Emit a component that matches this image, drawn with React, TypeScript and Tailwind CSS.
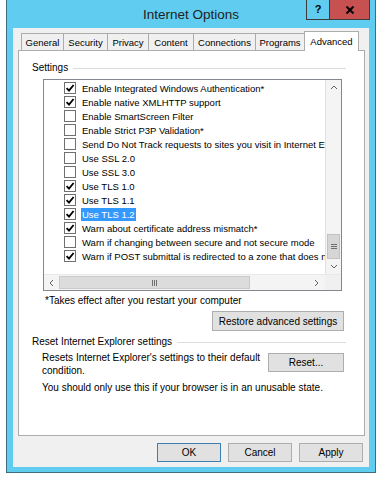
import React from "react";

const FONT = { fontFamily: '"Liberation Sans", Arial, sans-serif' };

function Box({ checked }: { checked: boolean }) {
  return (
    <span className="w-[12px] h-[12px] border border-[#707070] bg-white flex items-center justify-center shrink-0">
      {checked && (
        <svg width="10" height="10" viewBox="0 0 10 10">
          <path d="M1.6 5.2 L4 7.6 L8.6 2" stroke="#000" strokeWidth="1.8" fill="none" />
        </svg>
      )}
    </span>
  );
}

const rows: [string, boolean, boolean][] = [
  ["Enable Integrated Windows Authentication*", true, false],
  ["Enable native XMLHTTP support", true, false],
  ["Enable SmartScreen Filter", false, false],
  ["Enable Strict P3P Validation*", false, false],
  ["Send Do Not Track requests to sites you visit in Internet E", false, false],
  ["Use SSL 2.0", false, false],
  ["Use SSL 3.0", false, false],
  ["Use TLS 1.0", true, false],
  ["Use TLS 1.1", true, false],
  ["Use TLS 1.2", true, true],
  ["Warn about certificate address mismatch*", true, false],
  ["Warn if changing between secure and not secure mode", false, false],
  ["Warn if POST submittal is redirected to a zone that does n", true, false],
];

const tabs: [string, number][] = [
  ["General", 42],
  ["Security", 44],
  ["Privacy", 41],
  ["Content", 45],
  ["Connections", 62],
  ["Programs", 49],
];

function Chevron({ dir }: { dir: "up" | "down" | "left" | "right" }) {
  const d =
    dir === "up"
      ? "M1 5 L4 2 L7 5"
      : dir === "down"
      ? "M1 2 L4 5 L7 2"
      : dir === "left"
      ? "M5 1 L2 4 L5 7"
      : "M2 1 L5 4 L2 7";
  return (
    <svg width="8" height="8" viewBox="0 0 8 8">
      <path d={d} stroke="#606060" strokeWidth="1" fill="none" />
    </svg>
  );
}

export default function App() {
  return (
    <div className="w-[377px] h-[477px] bg-white text-black" style={FONT}>
      <div className="ml-[6px] w-[370px] h-[473px] border-x border-b border-[#3d6c83] bg-[#60cdf0] flex flex-col">
        {/* Title bar */}
        <div className="relative h-[28px] shrink-0 flex items-center justify-center">
          <span className="text-[13.5px] text-[#222] leading-none pt-[1px]">Internet Options</span>
          <div className="absolute top-0 right-[5px] flex border-x border-b border-[#3c3c3c]">
            <div className="w-[23px] h-[19px] border-r border-[#3c3c3c] flex items-center justify-center text-[11px] font-bold leading-none">
              ?
            </div>
            <div className="w-[39px] h-[19px] bg-[#c75050] flex items-center justify-center">
              <svg width="10" height="8" viewBox="0 0 10 8">
                <path d="M1.5 0.5 L8.5 7.5 M8.5 0.5 L1.5 7.5" stroke="#000" strokeWidth="2" />
              </svg>
            </div>
          </div>
        </div>

        {/* Client */}
        <div className="mx-[6px] h-[439px] bg-[#f0f0f0] flex flex-col pt-[3px]">
          {/* Tabs */}
          <div className="h-[19px] flex items-end pl-[8px] relative z-10">
            {tabs.map(([t, w]) => (
              <div
                key={t}
                style={{ width: w }}
                className="h-[17px] border-l border-t border-[#acacac] bg-[#f0f0f0] flex items-center justify-center text-[9.5px] leading-none pt-[2px]"
              >
                {t}
              </div>
            ))}
            <div className="w-[55px] h-[20px] -mb-[1px] border-l border-t border-r border-[#acacac] bg-white flex items-center justify-center text-[9.5px] leading-none">
              Advanced
            </div>
          </div>

          {/* Tab page */}
          <div className="ml-[5px] w-[347px] h-[386px] border border-[#acacac] bg-white flex flex-col">
            <div className="mt-[11px] pl-[13px] pr-[18px] h-[12px] flex items-center text-[10px]">
              <span className="leading-none">Settings</span>
              <div className="flex-1 h-px bg-[#dcdcdc] ml-[5px]" />
            </div>

            {/* Listbox */}
            <div className="mt-[5px] ml-[24px] w-[299px] h-[212px] border border-[#828790] flex flex-col">
              <div className="flex h-[194px]">
                <div className="w-[281px] h-[194px] overflow-hidden pt-[1px]">
                  {rows.map(([label, checked, hl]) => (
                    <div key={label} className="h-[14px] flex items-center pl-[20px] whitespace-nowrap text-[9.5px]">
                      <Box checked={checked} />
                      <span
                        className={
                          hl
                            ? "ml-[5px] px-[1px] leading-[13px] bg-[#3399ff] text-white"
                            : "ml-[5px] px-[1px] leading-[13px]"
                        }
                      >
                        {label}
                      </span>
                    </div>
                  ))}
                </div>
                {/* Vertical scrollbar */}
                <div className="w-[16px] h-[194px] bg-[#f4f4f4] border-l border-[#e0e0e0] flex flex-col">
                  <div className="h-[16px] flex items-center justify-center">
                    <Chevron dir="up" />
                  </div>
                  <div className="h-[138px]" />
                  <div className="h-[25px] mx-[1px] bg-[#d6d6d6] border border-[#c2c2c2] flex flex-col items-center justify-center gap-[1px]">
                    <div className="w-[6px] h-px bg-[#707070]" />
                    <div className="w-[6px] h-px bg-[#707070]" />
                    <div className="w-[6px] h-px bg-[#707070]" />
                  </div>
                  <div className="h-[15px] flex items-center justify-center">
                    <Chevron dir="down" />
                  </div>
                </div>
              </div>
              {/* Horizontal scrollbar */}
              <div className="h-[16px] flex bg-[#f4f4f4] border-t border-[#e8e8e8]">
                <div className="w-[15px] flex items-center justify-center">
                  <Chevron dir="left" />
                </div>
                <div className="w-[191px] my-[1px] bg-[#dcdcdc] border border-[#cacaca] flex items-center justify-center gap-[1px]">
                  <div className="w-px h-[6px] bg-[#707070]" />
                  <div className="w-px h-[6px] bg-[#707070]" />
                  <div className="w-px h-[6px] bg-[#707070]" />
                </div>
                <div className="w-[59px]" />
                <div className="w-[16px] flex items-center justify-center">
                  <Chevron dir="right" />
                </div>
                <div className="w-[16px] bg-[#f0f0f0]" />
              </div>
            </div>

            <div className="mt-[4px] ml-[26px] h-[12px] text-[10px] leading-[12px]">
              *Takes effect after you restart your computer
            </div>

            <div className="mt-[4px] mr-[20px] self-end w-[132px] h-[20px] bg-[#e1e1e1] border border-[#adadad] flex items-center justify-center text-[10px]">
              Restore advanced settings
            </div>

            <div className="mt-[5px] pl-[13px] pr-[18px] h-[12px] flex items-center text-[10px]">
              <span className="leading-none">Reset Internet Explorer settings</span>
              <div className="flex-1 h-px bg-[#dcdcdc] ml-[5px]" />
            </div>

            <div className="mt-[3px] pl-[23px] pr-[20px] flex justify-between">
              <div className="w-[222px] text-[10px] leading-[13px]">
                Resets Internet Explorer's settings to their default condition.
              </div>
              <div className="mt-[2px] w-[76px] h-[19px] bg-[#e1e1e1] border border-[#adadad] flex items-center justify-center text-[10px]">
                Reset...
              </div>
            </div>

            <div className="mt-[5px] pl-[23px] text-[10px] leading-[12px]">
              You should only use this if your browser is in an unusable state.
            </div>
          </div>

          {/* Dialog buttons */}
          <div className="mt-[7px] mr-[6px] flex justify-end gap-[7px]">
            <div className="w-[64px] h-[19px] bg-[#e1e1e1] border border-[#3c7fb1] flex items-center justify-center text-[10px]">
              OK
            </div>
            <div className="w-[64px] h-[19px] bg-[#e1e1e1] border border-[#adadad] flex items-center justify-center text-[10px]">
              Cancel
            </div>
            <div className="w-[64px] h-[19px] bg-[#e1e1e1] border border-[#adadad] flex items-center justify-center text-[10px]">
              Apply
            </div>
          </div>
        </div>
      </div>
    </div>
  );
}
